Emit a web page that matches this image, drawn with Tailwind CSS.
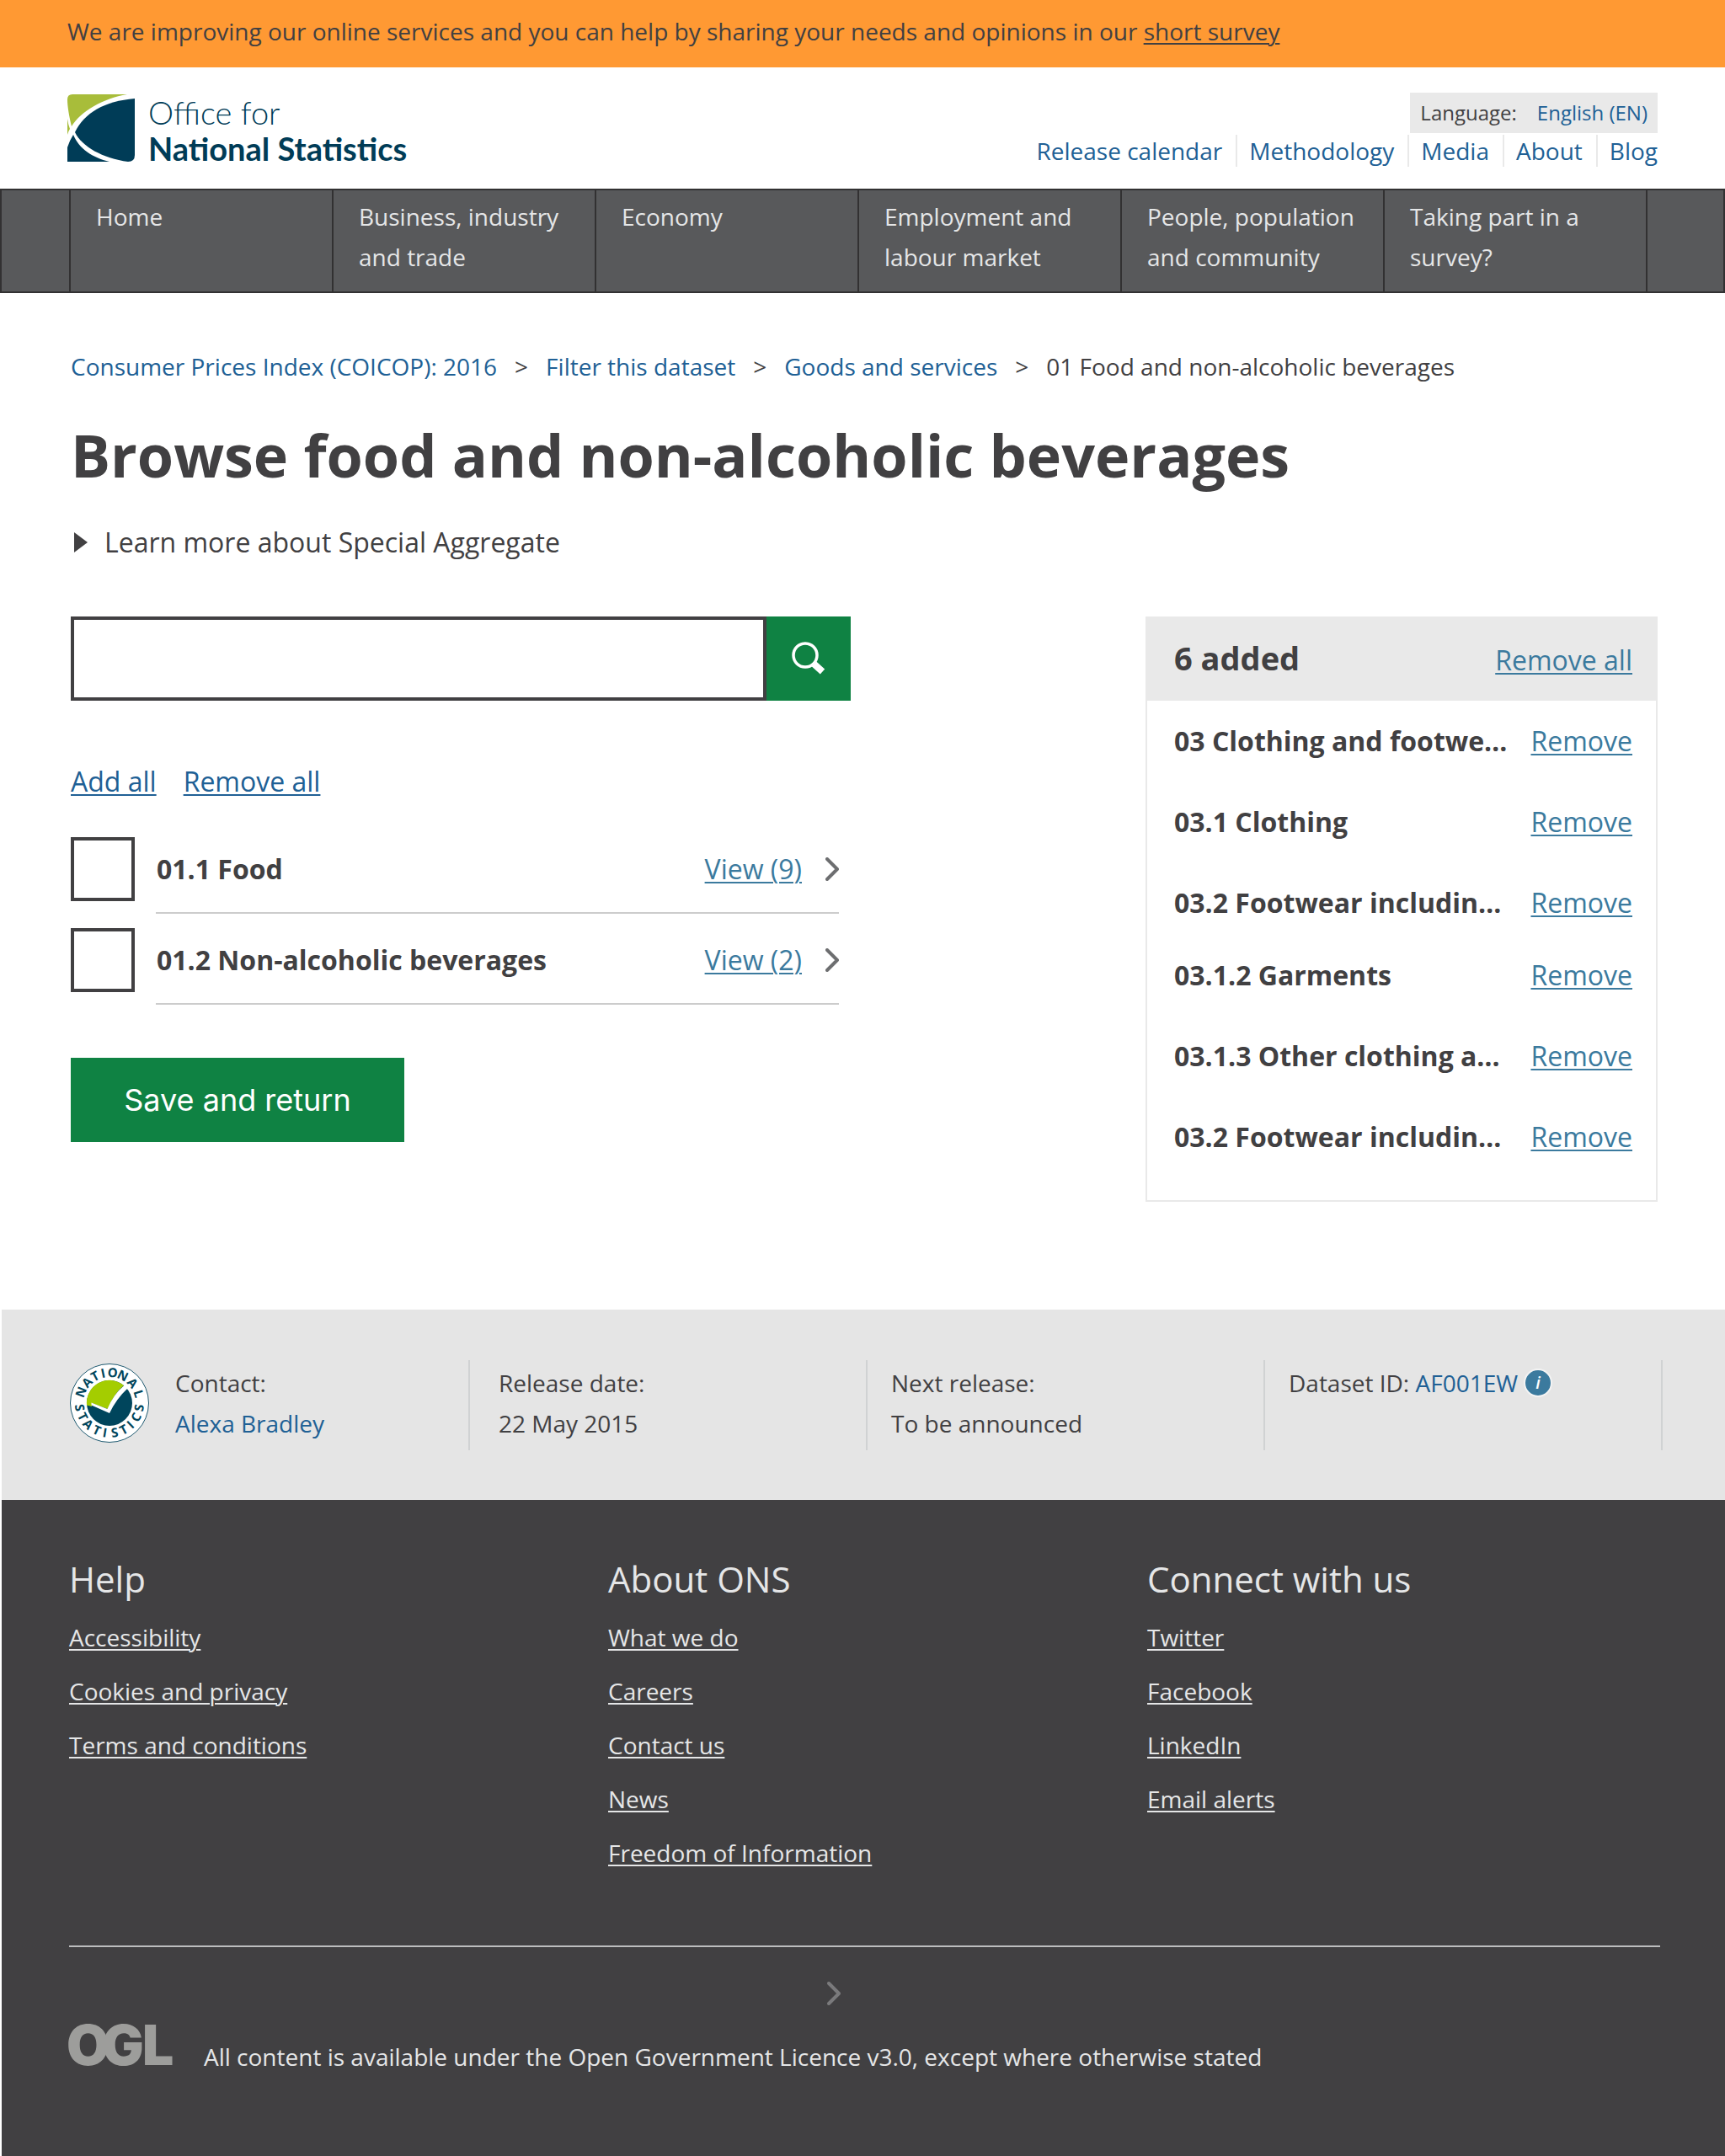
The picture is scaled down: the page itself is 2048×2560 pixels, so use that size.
<!DOCTYPE html>
<html lang="en">
<head>
<meta charset="utf-8">
<meta name="viewport" content="width=device-width, initial-scale=1">
<title>Browse food and non-alcoholic beverages</title>
<script src="https://cdn.jsdelivr.net/npm/@tailwindcss/browser@4"></script>
</head>
<body class="flex min-h-screen flex-col bg-white font-['Open_Sans',sans-serif] text-[28px] leading-[48px] text-[#414042]">

<!-- Survey banner -->
<div class="bg-[#ff9933] px-20 pt-[13px] pb-[19px]">
  <p>We are improving our online services and you can help by sharing your needs and opinions in our <a href="#" class="underline decoration-2 underline-offset-[3px]">short survey</a></p>
</div>

<header>
  <div class="flex items-start justify-between px-20 pt-[30px] pb-[26px]">
    <a href="#" aria-label="Office for National Statistics" class="flex gap-4 pt-0.5 text-[#003c57]">
      <svg class="size-20" viewBox="0 0 80 80" aria-hidden="true">
        <path fill="#a8bd3a" d="M6 0H71C42 5 16 20 5 38C2 26 0 14 0 6Q0 0 6 0Z"/>
        <path fill="#a8bd3a" d="M0 29Q1 36 3 41Q1 44 0 48Z"/>
        <path fill="#003c57" d="M80 5V72Q80 80 72 80C42 76 17 62 9 45C20 22 44 8 80 5Z"/>
        <path fill="#003c57" d="M0 63Q3 54 7 48C14 65 30 75 50 80H0Z"/>
      </svg>
      <span class="flex flex-col font-['Lato',sans-serif] text-[38px] leading-[43px]">
        <span class="font-light">Office for</span>
        <span class="font-bold">National Statistics</span>
      </span>
    </a>
    <div class="flex flex-col items-end">
      <div class="flex gap-6 bg-[#e9e9e9] px-3 text-[24px]">
        <span>Language:</span>
        <a href="#" class="text-[#206095]">English (EN)</a>
      </div>
      <ul class="mt-0.5 flex leading-[38px] text-[#206095]">
        <li class="pr-4"><a href="#">Release calendar</a></li>
        <li class="border-l-2 border-[#e9e9e9] pr-4 pl-3.5"><a href="#">Methodology</a></li>
        <li class="border-l-2 border-[#e9e9e9] pr-4 pl-3.5"><a href="#">Media</a></li>
        <li class="border-l-2 border-[#e9e9e9] pr-4 pl-3.5"><a href="#">About</a></li>
        <li class="border-l-2 border-[#e9e9e9] pl-3.5"><a href="#">Blog</a></li>
      </ul>
    </div>
  </div>

  <nav class="border-2 border-[#323132] bg-[#58595b] pr-[90px] pl-20 text-[#e5e6e7]">
    <ul class="grid grid-cols-6 border-r-2 border-[#323132]">
      <li class="border-l-2 border-[#323132] pt-[7px] pr-4 pb-[17px] pl-[30px]"><a href="#">Home</a></li>
      <li class="border-l-2 border-[#323132] pt-[7px] pr-4 pb-[17px] pl-[30px]"><a href="#">Business, industry and trade</a></li>
      <li class="border-l-2 border-[#323132] pt-[7px] pr-4 pb-[17px] pl-[30px]"><a href="#">Economy</a></li>
      <li class="border-l-2 border-[#323132] pt-[7px] pr-4 pb-[17px] pl-[30px]"><a href="#">Employment and labour market</a></li>
      <li class="border-l-2 border-[#323132] pt-[7px] pr-4 pb-[17px] pl-[30px]"><a href="#">People, population and community</a></li>
      <li class="border-l-2 border-[#323132] pt-[7px] pr-4 pb-[17px] pl-[30px]"><a href="#">Taking part in a survey?</a></li>
    </ul>
  </nav>
</header>

<main class="pt-[63px] pr-20 pb-32 pl-[84px]">
  <ol class="flex gap-[21px]">
    <li><a href="#" class="text-[#206095]">Consumer Prices Index (COICOP): 2016</a></li>
    <li aria-hidden="true">&gt;</li>
    <li><a href="#" class="text-[#206095]">Filter this dataset</a></li>
    <li aria-hidden="true">&gt;</li>
    <li><a href="#" class="text-[#206095]">Goods and services</a></li>
    <li aria-hidden="true">&gt;</li>
    <li>01 Food and non-alcoholic beverages</li>
  </ol>

  <h1 class="mt-[33px] text-[70px] leading-[96px] font-bold">Browse food and non-alcoholic beverages</h1>

  <details class="mt-8 text-[32px]">
    <summary class="flex items-center gap-5 pl-1">
      <svg class="h-6 w-4" viewBox="0 0 16 24" fill="currentColor" aria-hidden="true"><path d="M0 0L16 12L0 24Z"/></svg>
      Learn more about Special Aggregate
    </summary>
  </details>

  <div class="mt-16 flex items-start justify-between gap-16 text-[32px]">
    <form class="max-w-[926px] flex-1">
      <div class="flex h-[100px]">
        <input type="search" aria-label="Search" class="min-w-0 flex-1 border-4 border-[#414042] bg-white px-6 outline-none">
        <button type="button" aria-label="Search" class="flex w-[100px] items-center justify-center bg-[#0f8243]">
          <svg class="size-10" viewBox="0 0 40 40" fill="none" stroke="#fff" aria-hidden="true">
            <circle cx="16" cy="16" r="14" stroke-width="3.500"/>
            <path stroke-width="8" d="M26 26L36.500 35.500"/>
          </svg>
        </button>
      </div>

      <div class="mt-[72px] flex gap-8 text-[#206095]">
        <a href="#" class="underline decoration-2 underline-offset-[3px]">Add all</a>
        <a href="#" class="underline decoration-2 underline-offset-[3px]">Remove all</a>
      </div>

      <ul class="mt-[42px] mr-3.5 flex flex-col gap-[17px]">
        <li class="flex items-start gap-[25px]">
          <input type="checkbox" id="food" class="size-[76px] shrink-0 appearance-none border-4 border-[#414042] checked:bg-[#414042]">
          <div class="flex flex-1 items-center border-b-2 border-[#ccc] pt-3.5 pb-[27px]">
            <label for="food" class="flex-1 pl-px font-bold">01.1 Food</label>
            <a href="#" class="text-[#3b7a9e] underline decoration-2 underline-offset-[3px]">View (9)</a>
            <svg class="ml-7 h-7 w-4" viewBox="0 0 16 28" fill="none" stroke="#6d6e70" stroke-width="4" stroke-linecap="round" stroke-linejoin="round" aria-hidden="true"><path d="M2 2L14 14L2 26"/></svg>
          </div>
        </li>
        <li class="flex items-start gap-[25px]">
          <input type="checkbox" id="drinks" class="size-[76px] shrink-0 appearance-none border-4 border-[#414042] checked:bg-[#414042]">
          <div class="flex flex-1 items-center border-b-2 border-[#ccc] pt-3.5 pb-[27px]">
            <label for="drinks" class="flex-1 pl-px font-bold">01.2 Non-alcoholic beverages</label>
            <a href="#" class="text-[#3b7a9e] underline decoration-2 underline-offset-[3px]">View (2)</a>
            <svg class="ml-7 h-7 w-4" viewBox="0 0 16 28" fill="none" stroke="#6d6e70" stroke-width="4" stroke-linecap="round" stroke-linejoin="round" aria-hidden="true"><path d="M2 2L14 14L2 26"/></svg>
          </div>
        </li>
      </ul>

      <button type="button" class="mt-[63px] h-[100px] w-[396px] bg-[#0f8243] font-['Inter',sans-serif] text-[36px] text-white">Save and return</button>
    </form>

    <aside class="w-[608px] border-2 border-[#e9e9e9]">
      <div class="flex h-[98px] items-baseline justify-between bg-[#e9e9e9] pt-[23px] pr-7 pl-8">
        <h2 class="text-[38px] font-bold">6 added</h2>
        <a href="#" class="text-[#3b7a9e] underline decoration-2 underline-offset-[3px]">Remove all</a>
      </div>
      <div class="flex flex-col gap-[38px] pt-6 pr-7 pb-[51px] pl-8">
        <ul class="flex flex-col gap-12">
          <li class="flex justify-between"><span class="font-bold">03 Clothing and footwe…</span><a href="#" class="text-[#3b7a9e] underline decoration-2 underline-offset-[3px]">Remove</a></li>
          <li class="flex justify-between"><span class="font-bold">03.1 Clothing</span><a href="#" class="text-[#3b7a9e] underline decoration-2 underline-offset-[3px]">Remove</a></li>
          <li class="flex justify-between"><span class="font-bold">03.2 Footwear includin…</span><a href="#" class="text-[#3b7a9e] underline decoration-2 underline-offset-[3px]">Remove</a></li>
        </ul>
        <ul class="flex flex-col gap-12">
          <li class="flex justify-between"><span class="font-bold">03.1.2 Garments</span><a href="#" class="text-[#3b7a9e] underline decoration-2 underline-offset-[3px]">Remove</a></li>
          <li class="flex justify-between"><span class="font-bold">03.1.3 Other clothing a…</span><a href="#" class="text-[#3b7a9e] underline decoration-2 underline-offset-[3px]">Remove</a></li>
          <li class="flex justify-between"><span class="font-bold">03.2 Footwear includin…</span><a href="#" class="text-[#3b7a9e] underline decoration-2 underline-offset-[3px]">Remove</a></li>
        </ul>
      </div>
    </aside>
  </div>
</main>

<!-- Release details -->
<section class="ml-0.5 bg-[#e5e5e5] pt-[60px] pr-[74px] pb-[59px] pl-20">
  <div class="grid grid-cols-[476fr_472fr_472fr_472fr]">
    <div class="flex items-center gap-[30px] border-r-2 border-[#d0d2d3] pt-[3px] pb-2">
      <svg class="size-24 shrink-0" viewBox="-48 -48 96 96" role="img" aria-label="National Statistics">
        <circle r="46.500" fill="#fff" stroke="#1f5a70" stroke-width="1"/>
        <circle r="27" fill="#00455c"/>
        <path fill="#a4cd00" d="M-27 2.500A27 27 0 0 1 17 -21Q5 -11 -2 7L-21 0V4Z"/>
        <path fill="#fff" d="M-21.500 -.5L-2.500 7Q5 -11 17.500 -21L22 -18Q8 -5 0 12L-21.500 2.500Z"/>
        <g fill="#00455c" text-anchor="middle" font-size="15" font-weight="700" font-family="Open Sans, sans-serif">
          <text transform="rotate(-69)" y="-31">N</text>
          <text transform="rotate(-47)" y="-31">A</text>
          <text transform="rotate(-28)" y="-31">T</text>
          <text transform="rotate(-12)" y="-31">I</text>
          <text transform="rotate(6)" y="-31">O</text>
          <text transform="rotate(26)" y="-31">N</text>
          <text transform="rotate(49)" y="-31">A</text>
          <text transform="rotate(72)" y="-31">L</text>
          <text transform="rotate(81)" y="41">S</text>
          <text transform="rotate(63)" y="41">T</text>
          <text transform="rotate(45)" y="41">A</text>
          <text transform="rotate(25)" y="41">T</text>
          <text transform="rotate(9)" y="41">I</text>
          <text transform="rotate(-10)" y="41">S</text>
          <text transform="rotate(-28)" y="41">T</text>
          <text transform="rotate(-44)" y="41">I</text>
          <text transform="rotate(-62)" y="41">C</text>
          <text transform="rotate(-81)" y="41">S</text>
        </g>
      </svg>
      <p>Contact:<br><a href="#" class="text-[#206095]">Alexa Bradley</a></p>
    </div>
    <div class="border-r-2 border-[#d0d2d3] pt-[3px] pb-2 pl-[34px]"><p>Release date:<br>22 May 2015</p></div>
    <div class="border-r-2 border-[#d0d2d3] pt-[3px] pb-2 pl-7"><p>Next release:<br>To be announced</p></div>
    <div class="border-r-2 border-[#d0d2d3] pt-[3px] pb-2 pl-7">
      <div class="flex items-center gap-[7px]">
        <p>Dataset ID: <a href="#" class="text-[#206095]">AF001EW</a></p>
        <button type="button" aria-label="About the dataset ID" class="flex size-[34px] items-center justify-center rounded-full border-2 border-[#f3f3f3] bg-[#3b7a9e] text-[20px] leading-none font-semibold text-white italic">i</button>
      </div>
    </div>
  </div>
</section>

<footer class="ml-0.5 flex-1 bg-[#414042] pt-[66px] pb-[90px] pl-20 text-[#e5e6e7]">
  <div class="mr-[46px] grid grid-cols-3">
    <div>
      <h2 class="text-[42px] leading-[56px]">Help</h2>
      <ul class="mt-[17px] flex flex-col gap-4">
        <li><a href="#" class="underline decoration-2 underline-offset-[3px]">Accessibility</a></li>
        <li><a href="#" class="underline decoration-2 underline-offset-[3px]">Cookies and privacy</a></li>
        <li><a href="#" class="underline decoration-2 underline-offset-[3px]">Terms and conditions</a></li>
      </ul>
    </div>
    <div>
      <h2 class="text-[42px] leading-[56px]">About ONS</h2>
      <ul class="mt-[17px] flex flex-col gap-4">
        <li><a href="#" class="underline decoration-2 underline-offset-[3px]">What we do</a></li>
        <li><a href="#" class="underline decoration-2 underline-offset-[3px]">Careers</a></li>
        <li><a href="#" class="underline decoration-2 underline-offset-[3px]">Contact us</a></li>
        <li><a href="#" class="underline decoration-2 underline-offset-[3px]">News</a></li>
        <li><a href="#" class="underline decoration-2 underline-offset-[3px]">Freedom of Information</a></li>
      </ul>
    </div>
    <div>
      <h2 class="text-[42px] leading-[56px]">Connect with us</h2>
      <ul class="mt-[17px] flex flex-col gap-4">
        <li><a href="#" class="underline decoration-2 underline-offset-[3px]">Twitter</a></li>
        <li><a href="#" class="underline decoration-2 underline-offset-[3px]">Facebook</a></li>
        <li><a href="#" class="underline decoration-2 underline-offset-[3px]">LinkedIn</a></li>
        <li><a href="#" class="underline decoration-2 underline-offset-[3px]">Email alerts</a></li>
      </ul>
    </div>
  </div>

  <div class="mt-[86px] mr-[77px] border-t-2 border-[#bcbdbe] pt-[41px]">
    <svg class="ml-[900px] h-7 w-4" viewBox="0 0 16 28" fill="none" stroke="#7a7a7c" stroke-width="4" stroke-linecap="round" stroke-linejoin="round" aria-hidden="true"><path d="M2 2L14 14L2 26"/></svg>
    <div class="mt-[22px] flex items-baseline gap-10">
      <svg class="h-[50px] w-[120px] overflow-visible" viewBox="0 0 120 50" aria-label="OGL" role="img">
        <text y="49" x="-3 39 87" fill="#9d9d9b" font-family="Inter, sans-serif" font-weight="900" font-size="66">OGL</text>
      </svg>
      <p>All content is available under the Open Government Licence v3.0, except where otherwise stated</p>
    </div>
  </div>
</footer>
</body>
</html>
